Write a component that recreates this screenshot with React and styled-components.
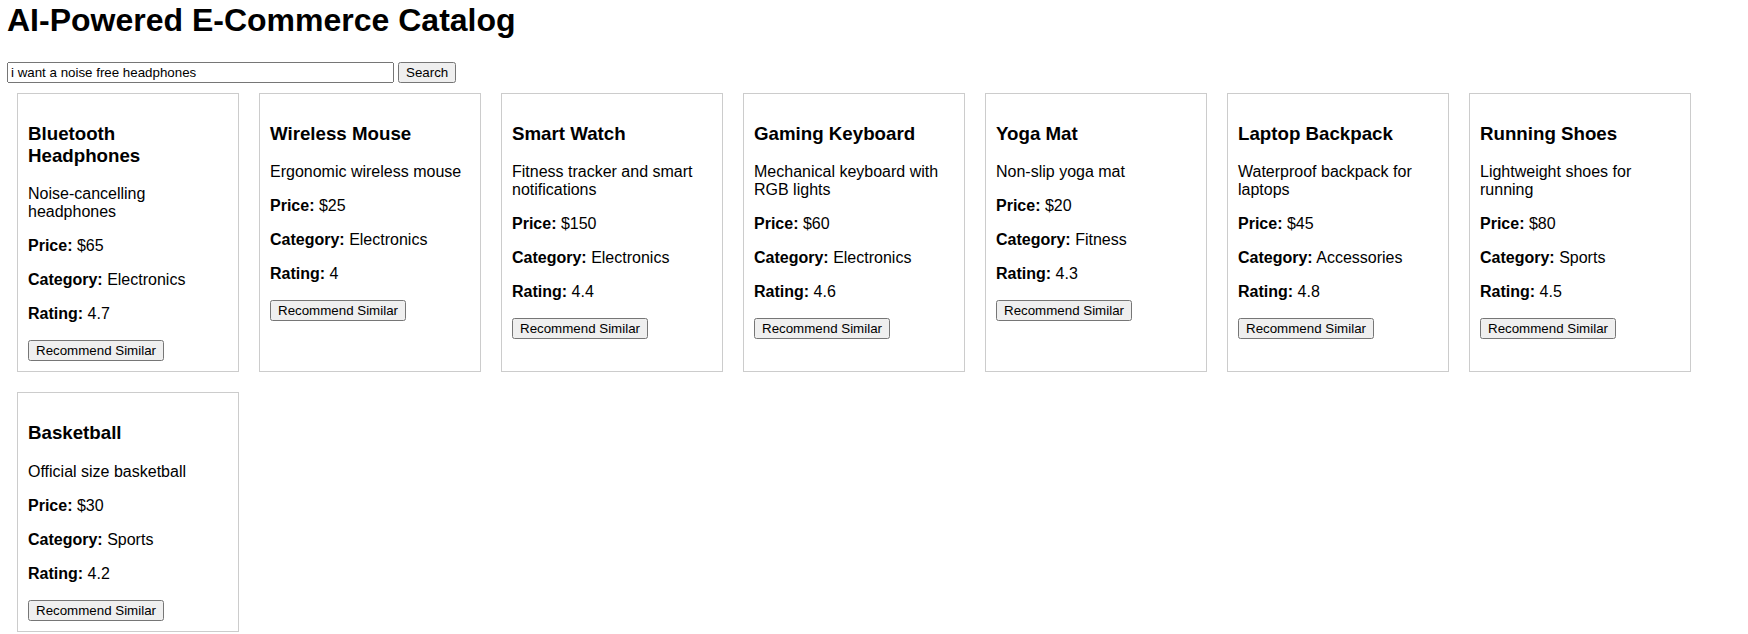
import React from "react";
import styled, { createGlobalStyle } from "styled-components";

const GlobalStyle = createGlobalStyle`
  html, body {
    margin: 0;
    padding: 0;
    background: #ffffff;
  }
  body {
    font-family: "Liberation Sans", Arial, sans-serif;
    color: #000000;
  }
`;

const Page = styled.div`
  padding: 2px 7px 0 7px;
`;

const Title = styled.h1`
  margin: 0 0 23px 0;
  font-size: 32px;
  font-weight: bold;
  line-height: normal;
`;

const SearchBar = styled.div`
  display: flex;
  align-items: center;
  gap: 4px;
`;

const SearchInput = styled.input`
  width: 387px;
  box-sizing: border-box;
  font-family: "Liberation Sans", Arial, sans-serif;
  font-size: 13.33px;
`;

const Button = styled.button`
  font-family: "Liberation Sans", Arial, sans-serif;
  font-size: 13.33px;
  margin-top: ${(p) => (p.$inCard ? "1px" : "0")};
`;

const Grid = styled.div`
  display: flex;
  flex-wrap: wrap;
`;

const Card = styled.div`
  width: 200px;
  padding: 10px;
  margin: 10px;
  border: 1px solid #cccccc;
`;

const CardTitle = styled.h3`
  font-size: 18.72px;
  font-weight: bold;
  margin: 18.72px 0;
`;

const Text = styled.p`
  font-size: 16px;
  margin: 16px 0;
`;

const products = [
  { name: "Bluetooth Headphones", desc: "Noise-cancelling headphones", price: 65, category: "Electronics", rating: "4.7" },
  { name: "Wireless Mouse", desc: "Ergonomic wireless mouse", price: 25, category: "Electronics", rating: "4" },
  { name: "Smart Watch", desc: "Fitness tracker and smart notifications", price: 150, category: "Electronics", rating: "4.4" },
  { name: "Gaming Keyboard", desc: "Mechanical keyboard with RGB lights", price: 60, category: "Electronics", rating: "4.6" },
  { name: "Yoga Mat", desc: "Non-slip yoga mat", price: 20, category: "Fitness", rating: "4.3" },
  { name: "Laptop Backpack", desc: "Waterproof backpack for laptops", price: 45, category: "Accessories", rating: "4.8" },
  { name: "Running Shoes", desc: "Lightweight shoes for running", price: 80, category: "Sports", rating: "4.5" },
  { name: "Basketball", desc: "Official size basketball", price: 30, category: "Sports", rating: "4.2" },
];

export default function App() {
  return (
    <Page>
      <GlobalStyle />
      <Title>AI-Powered E-Commerce Catalog</Title>
      <SearchBar>
        <SearchInput type="text" defaultValue="i want a noise free headphones" />
        <Button>Search</Button>
      </SearchBar>
      <Grid>
        {products.map((p) => (
          <Card key={p.name}>
            <CardTitle>{p.name}</CardTitle>
            <Text>{p.desc}</Text>
            <Text><strong>Price:</strong> ${p.price}</Text>
            <Text><strong>Category:</strong> {p.category}</Text>
            <Text><strong>Rating:</strong> {p.rating}</Text>
            <Button $inCard>Recommend Similar</Button>
          </Card>
        ))}
      </Grid>
    </Page>
  );
}
